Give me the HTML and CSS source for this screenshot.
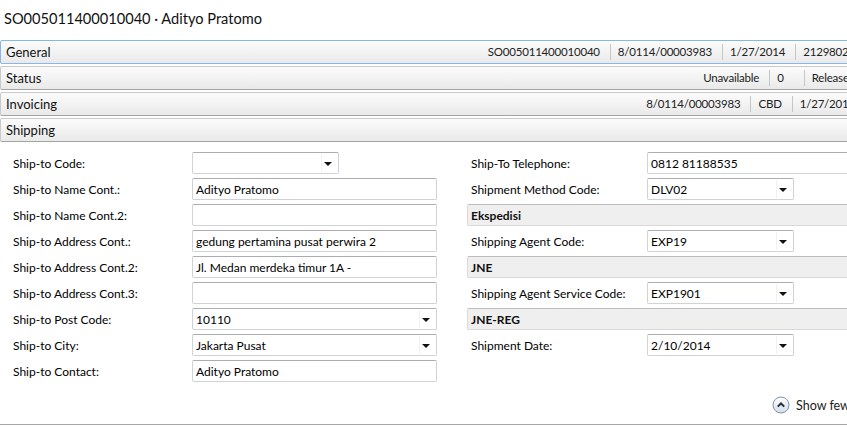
FILE: index.html
```
<!DOCTYPE html>
<html>
<head>
<meta charset="utf-8">
<link rel="stylesheet" href="styles.css">
</head>
<body>
<div class="page">
  <h1 class="title">SO005011400010040 · Adityo Pratomo</h1>

  <div class="tab tab-active">
    <span class="tab-name">General</span>
    <div class="summary">
      <span class="cell">SO005011400010040</span>
      <span class="cell">8/0114/00003983</span>
      <span class="cell">1/27/2014</span>
      <span class="cell">21298020</span>
    </div>
  </div>

  <div class="tab">
    <span class="tab-name">Status</span>
    <div class="summary">
      <span class="cell">Unavailable</span>
      <span class="cell cell-num">0</span>
      <span class="cell">Released</span>
    </div>
  </div>

  <div class="tab">
    <span class="tab-name">Invoicing</span>
    <div class="summary">
      <span class="cell">8/0114/00003983</span>
      <span class="cell">CBD</span>
      <span class="cell">1/27/2014</span>
    </div>
  </div>

  <div class="tab">
    <span class="tab-name">Shipping</span>
  </div>

  <div class="tab-body">
    <div class="columns">
      <div class="col col-left">
        <div class="row"><label>Ship-to Code:</label><div class="field field-short select"><span></span></div></div>
        <div class="row"><label>Ship-to Name Cont.:</label><div class="field"><span>Adityo Pratomo</span></div></div>
        <div class="row"><label>Ship-to Name Cont.2:</label><div class="field"><span></span></div></div>
        <div class="row"><label>Ship-to Address Cont.:</label><div class="field"><span>gedung pertamina pusat perwira 2</span></div></div>
        <div class="row"><label>Ship-to Address Cont.2:</label><div class="field"><span>Jl. Medan merdeka timur 1A -</span></div></div>
        <div class="row"><label>Ship-to Address Cont.3:</label><div class="field"><span></span></div></div>
        <div class="row"><label>Ship-to Post Code:</label><div class="field select"><span>10110</span></div></div>
        <div class="row"><label>Ship-to City:</label><div class="field select"><span>Jakarta Pusat</span></div></div>
        <div class="row"><label>Ship-to Contact:</label><div class="field"><span>Adityo Pratomo</span></div></div>
      </div>
      <div class="col col-right">
        <div class="row"><label>Ship-To Telephone:</label><div class="field"><span>0812 81188535</span></div></div>
        <div class="row"><label>Shipment Method Code:</label><div class="field field-short select"><span>DLV02</span></div></div>
        <div class="group">Ekspedisi</div>
        <div class="row"><label>Shipping Agent Code:</label><div class="field field-short select"><span>EXP19</span></div></div>
        <div class="group">JNE</div>
        <div class="row"><label>Shipping Agent Service Code:</label><div class="field field-short select"><span>EXP1901</span></div></div>
        <div class="group">JNE-REG</div>
        <div class="row"><label>Shipment Date:</label><div class="field field-short select"><span>2/10/2014</span></div></div>
      </div>
    </div>
    <div class="more">
      <svg class="more-icon" width="18" height="18" viewBox="0 0 18 18">
        <defs>
          <linearGradient id="g" x1="0" y1="0" x2="0" y2="1">
            <stop offset="0" stop-color="#ffffff"/>
            <stop offset="1" stop-color="#d3dde8"/>
          </linearGradient>
        </defs>
        <circle cx="9" cy="9" r="8" fill="url(#g)" stroke="#7d93ad" stroke-width="1"/>
        <path d="M5.8 10.6 L9 7.4 L12.2 10.6" fill="none" stroke="#1e2a38" stroke-width="2"/>
      </svg>
      <span class="more-text">Show fewer</span>
    </div>
  </div>
</div>
</body>
</html>
```
FILE: styles.css
```
html, body {
  margin: 0;
  padding: 0;
  background: #ffffff;
  overflow: hidden;
}

.page {
  width: 862px;
  font-family: Lato, "Liberation Sans", sans-serif;
  font-size: 12px;
  color: #000;
}

.title {
  margin: 0;
  height: 40px;
  line-height: 38px;
  padding-left: 4px;
  font-size: 14.6px;
  font-weight: 400;
  color: #111;
}

.tab {
  box-sizing: border-box;
  height: 24px;
  margin-bottom: 2px;
  display: flex;
  align-items: center;
  border: 1px solid #c9c9c9;
  border-bottom-color: #a3a3a3;
  border-radius: 2px;
  background: linear-gradient(#fbfbfb 0%, #f3f3f3 50%, #e9e9e9 100%);
  white-space: nowrap;
}

.tab-active {
  border-color: #86b6ea;
}

.tab-name {
  flex: 1;
  padding-left: 5px;
  font-size: 13px;
  color: #111;
}

.summary {
  display: flex;
  align-items: center;
  padding-right: 6px;
  font-size: 11.5px;
  letter-spacing: -0.2px;
  color: #222;
}

.cell {
  padding: 0 10px 0 7px;
  border-left: 1px solid #c6c6c6;
  line-height: 16px;
}

.cell:first-child {
  border-left: none;
}

.cell:last-child {
  padding-right: 0;
}

.cell-num {
  padding-right: 20px;
}

.tab-body {
  padding-top: 8px;
  border-bottom: 1px solid #a6a6a6;
  background: #fff;
}

.columns {
  display: flex;
  gap: 30px;
}

.col {
  display: flex;
  flex-direction: column;
  gap: 4px;
}

.col-left {
  padding-left: 13px;
  width: 424px;
}

.col-right {
  flex: 1;
}

.row {
  display: flex;
  align-items: center;
  height: 22px;
}

.row label {
  flex: none;
  white-space: nowrap;
}

.col-left .row label {
  width: 179px;
}

.col-right .row label {
  width: 176px;
  padding-left: 4px;
}

.field {
  box-sizing: border-box;
  position: relative;
  width: 245px;
  height: 22px;
  border: 1px solid #cfd2d6;
  border-top-color: #abadb3;
  border-radius: 2px;
  background: #fff;
  display: flex;
  align-items: center;
  padding-left: 3px;
  white-space: nowrap;
  color: #000;
}

.field-short {
  width: 147px;
}

.select::before {
  content: "";
  position: absolute;
  right: 16px;
  top: 1px;
  bottom: 1px;
  border-left: 1px solid #f1f1f1;
}

.select::after {
  content: "";
  position: absolute;
  right: 6px;
  top: 9px;
  border-left: 4px solid transparent;
  border-right: 4px solid transparent;
  border-top: 4px solid #111;
}

.group {
  box-sizing: border-box;
  height: 22px;
  display: flex;
  align-items: center;
  padding-left: 3px;
  background: #efefef;
  border: 1px solid #dadada;
  border-top-color: #bcbcbc;
  border-right: none;
  border-radius: 2px 0 0 2px;
  font-weight: 700;
  color: #111;
}

.more {
  display: flex;
  align-items: center;
  gap: 6px;
  height: 18px;
  margin-top: 14px;
  margin-bottom: 10px;
  padding-left: 772px;
  white-space: nowrap;
}

.more-icon {
  flex: none;
}

.more-text {
  font-size: 12.5px;
  color: #1a1a1a;
}
```
